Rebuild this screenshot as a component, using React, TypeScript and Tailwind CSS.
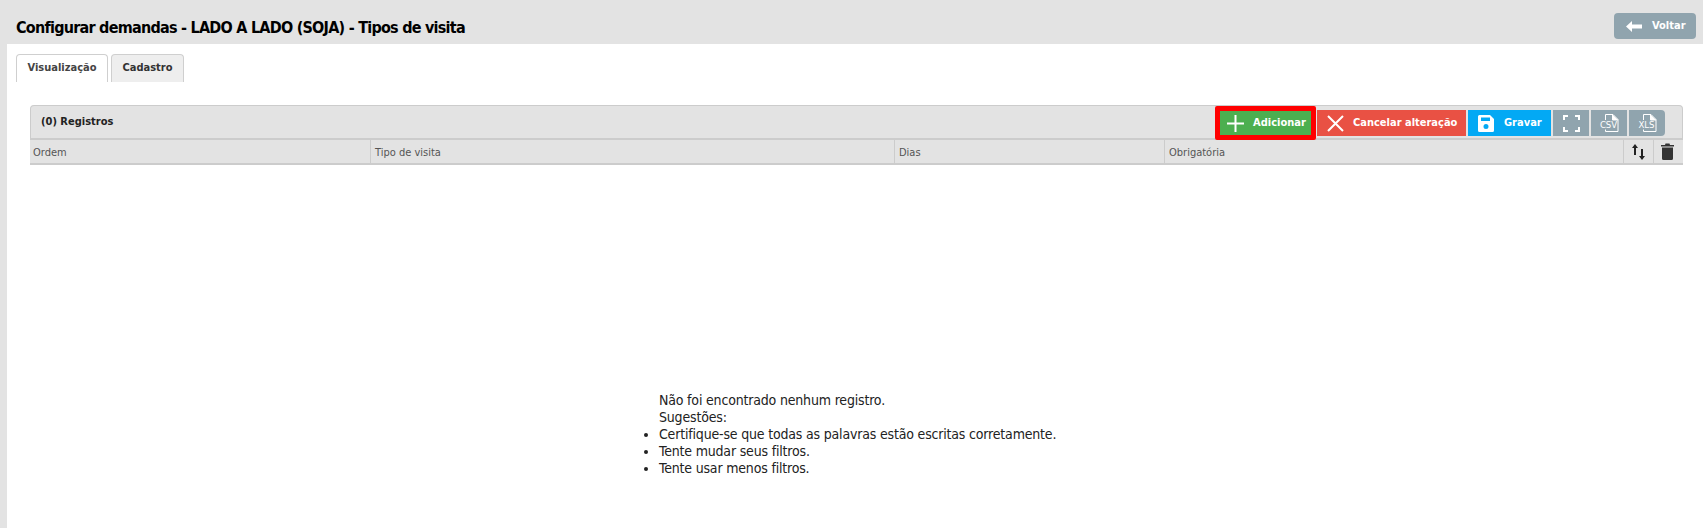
import React from "react";

const font = { fontFamily: '"DejaVu Sans Condensed", "DejaVu Sans", sans-serif' };

function FileIcon({ label }: { label: string }) {
  return (
    <svg width="30" height="24" viewBox="0 0 30 24" fill="none" stroke="#fff" strokeWidth="1">
      <path d="M11.5 9V3.5H19L24 8.5V20.5H11.5V18.5" />
      <path d="M18.5 3.5V9H24" fill="#fff" />
      <text x="14.5" y="17" textAnchor="middle" fontSize="9.5" fontWeight="400" fill="#fff" stroke="none" fontFamily="DejaVu Sans Condensed">{label}</text>
    </svg>
  );
}

function Btn({ className, children }: { className: string; children: React.ReactNode }) {
  return <div className={`flex items-center text-white font-bold text-[11px] whitespace-nowrap shrink-0 ${className}`}>{children}</div>;
}

export default function App() {
  return (
    <div className="w-[1703px] h-[528px] overflow-hidden bg-[#e3e3e3] flex flex-col text-[#222]" style={font}>
      <div className="h-[44px] shrink-0 flex items-start justify-between pl-4 pr-[7px]">
        <h1 className="text-[16px] font-bold text-black tracking-[-0.75px] mt-[19px] leading-[17px]">Configurar demandas - LADO A LADO (SOJA) - Tipos de visita</h1>
        <div className="w-[82px] h-[26px] mt-[13px] rounded-[4px] bg-[#90a4ae] flex items-center text-white font-bold text-[11px] pl-[12px] gap-[10px]">
          <svg width="16" height="11" viewBox="0 0 16 11" fill="#fff"><path d="M0 5.5L6 0V3.5H16V7.5H6V11Z" /></svg>
          <span>Voltar</span>
        </div>
      </div>
      <div className="ml-[7px] flex-1 bg-white flex flex-col min-h-0">
        <div className="flex items-end gap-[3px] pl-[9px] h-[38px] shrink-0">
          <div className="h-[28px] w-[92px] rounded-t-[4px] border border-b-0 border-[#cfcfcf] bg-white flex items-center justify-center text-[11px] font-bold text-[#444]">Visualização</div>
          <div className="h-[28px] w-[73px] rounded-t-[4px] border border-b-0 border-[#cfcfcf] bg-[#eeeeee] flex items-center justify-center text-[11px] font-bold text-[#333]">Cadastro</div>
        </div>
        <div className="ml-[23px] mt-[23px] w-[1653px]">
          <div className="h-[35px] rounded-t-[4px] border border-[#cccccc] border-b-2 bg-[#e3e3e3] flex items-center justify-between">
            <span className="pl-[10px] text-[11px] font-bold text-[#222]">(0) Registros</span>
            <div className="flex items-center pr-[17px] pt-[2px] gap-[2px]">
              <div className="border-[5px] border-[#ff0000] rounded-[2px] -mr-[1px] shrink-0">
                <Btn className="w-[91px] h-[24px] bg-[#4caf50] pl-[7px] gap-[9px]">
                  <svg width="17" height="17" viewBox="0 0 17 17" stroke="#fff" strokeWidth="2"><path d="M8.5 0V17M0 8.5H17" /></svg>
                  <span>Adicionar</span>
                </Btn>
              </div>
              <Btn className="w-[149px] h-[26px] bg-[#e95144] pl-[10px] gap-[9px]">
                <svg width="17" height="17" viewBox="0 0 17 17" stroke="#fff" strokeWidth="2"><path d="M1 1L16 16M16 1L1 16" /></svg>
                <span>Cancelar alteração</span>
              </Btn>
              <Btn className="w-[83px] h-[26px] bg-[#03a9f4] pl-[10px] gap-[10px]">
                <svg width="16" height="17" viewBox="0 0 16 17" fill="#fff"><path fillRule="evenodd" d="M1.5 0H12L16 4V15.5A1.5 1.5 0 0 1 14.5 17H1.5A1.5 1.5 0 0 1 0 15.5V1.5A1.5 1.5 0 0 1 1.5 0ZM3 2.5V6H12V2.5ZM8 9A2.5 2.5 0 1 0 8 14A2.5 2.5 0 1 0 8 9Z" /></svg>
                <span>Gravar</span>
              </Btn>
              <Btn className="w-[36px] h-[26px] bg-[#90a4ae] justify-center">
                <svg width="17" height="17" viewBox="0 0 17 17" fill="none" stroke="#fff" strokeWidth="2"><path d="M1 5V1H5M12 1H16V5M16 12V16H12M5 16H1V12" /></svg>
              </Btn>
              <Btn className="w-[36px] h-[26px] bg-[#90a4ae] justify-center"><FileIcon label="CSV" /></Btn>
              <Btn className="w-[36px] h-[26px] bg-[#90a4ae] justify-center rounded-r-[4px]"><FileIcon label="XLS" /></Btn>
            </div>
          </div>
          <div className="h-[25px] border-b-2 border-[#cccccc] bg-[#e3e3e3] flex text-[11px] text-[#555]">
            <div className="w-[341px] pl-[3px] pt-[3px] flex items-center border-r border-[#cccccc]">Ordem</div>
            <div className="w-[524px] pl-[4px] pt-[3px] flex items-center border-r border-[#cccccc]">Tipo de visita</div>
            <div className="w-[270px] pl-[4px] pt-[3px] flex items-center border-r border-[#cccccc]">Dias</div>
            <div className="flex-1 pl-[4px] pt-[3px] flex items-center border-r border-[#cccccc]">Obrigatória</div>
            <div className="w-[30px] flex items-center justify-center border-r border-[#cccccc]">
              <svg width="13" height="16" viewBox="0 0 13 16" fill="#222"><path d="M3 0L6 4H4V11H2V4H0ZM10 16L7 12H9V5H11V12H13Z" /></svg>
            </div>
            <div className="w-[29px] flex items-center justify-center pr-[2px]">
              <svg width="13" height="17" viewBox="0 0 13 17" fill="#333"><path d="M0 2H4L4.5 0.5H8.5L9 2H13V3.5H0ZM1 4.5H12V15.5A1.5 1.5 0 0 1 10.5 17H2.5A1.5 1.5 0 0 1 1 15.5Z" /></svg>
            </div>
          </div>
        </div>
        <div className="pl-[652px] pt-[227px] text-[14px] leading-[17px] text-[#222] tracking-[-0.18px]">
          <div>Não foi encontrado nenhum registro.</div>
          <div>Sugestões:</div>
          <ul className="list-disc">
            <li>Certifique-se que todas as palavras estão escritas corretamente.</li>
            <li>Tente mudar seus filtros.</li>
            <li>Tente usar menos filtros.</li>
          </ul>
        </div>
      </div>
    </div>
  );
}
